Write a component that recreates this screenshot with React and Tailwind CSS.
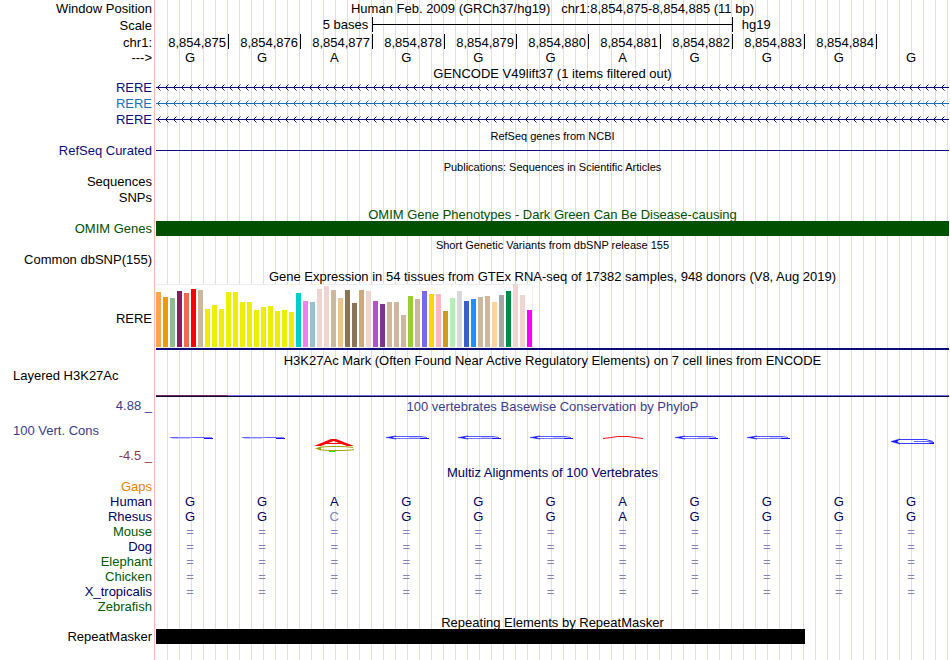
import React from 'react';
import clsx from 'clsx';

const positions = ['8,854,875', '8,854,876', '8,854,877', '8,854,878', '8,854,879', '8,854,880', '8,854,881', '8,854,882', '8,854,883', '8,854,884'];
const bases = 'GGAGGGAGGGG'.split('');

// [height, color] for each of the 54 GTEx tissues
const tissues = [
  [55, '#ffa54f'], [50, '#ee9a00'], [49, '#8fbc8f'], [56, '#8b1c62'], [54, '#ee6a50'], [58, '#ff0000'],
  [57, '#cdb79e'], [38, '#eeee00'], [42, '#eeee00'], [38, '#eeee00'], [55, '#eeee00'], [55, '#eeee00'],
  [45, '#eeee00'], [45, '#eeee00'], [37, '#eeee00'], [40, '#eeee00'], [41, '#eeee00'], [36, '#eeee00'],
  [37, '#eeee00'], [35, '#eeee00'], [54, '#00cdcd'], [46, '#ee82ee'], [45, '#9ac0cd'], [58, '#eed5d2'],
  [61, '#eed5d2'], [57, '#cdb79e'], [49, '#eec591'], [57, '#8b7355'], [44, '#8b7355'], [57, '#cdaa7d'],
  [56, '#eed5d2'], [46, '#b452cd'], [43, '#7a378b'], [45, '#cdb79e'], [45, '#cdb79e'], [32, '#cdb79e'],
  [51, '#9acd32'], [48, '#cdb79e'], [56, '#7a67ee'], [53, '#ffd700'], [53, '#ffb6c1'], [36, '#cd9b1d'],
  [49, '#b4eeb4'], [56, '#d9d9d9'], [46, '#3a5fcd'], [48, '#1e90ff'], [50, '#cdb79e'], [51, '#cdb79e'],
  [45, '#ffd39b'], [52, '#a6a6a6'], [56, '#008b45'], [63, '#eed5d2'], [52, '#eed5d2'], [37, '#ff00ff'],
];

const species = [
  { name: 'Human', color: 'text-[#000064]', seq: bases },
  { name: 'Rhesus', color: 'text-[#000064]', seq: 'GGCGGGAGGGG'.split('') },
  { name: 'Mouse', color: 'text-[#005a00]', seq: Array(11).fill('=') },
  { name: 'Dog', color: 'text-[#000064]', seq: Array(11).fill('=') },
  { name: 'Elephant', color: 'text-[#005a00]', seq: Array(11).fill('=') },
  { name: 'Chicken', color: 'text-[#005a00]', seq: Array(11).fill('=') },
  { name: 'X_tropicalis', color: 'text-[#000064]', seq: Array(11).fill('=') },
  { name: 'Zebrafish', color: 'text-[#005a00]', seq: [] },
];

const logos = ['flat', 'flat', 'stack', 'loop', 'loop', 'loop', 'peak', 'loop', 'loop', null, 'wide'];

const Row = ({ label, labelClass = 'text-black', height = 'h-4', children }) => (
  <div className={clsx('flex', height)}>
    <div className={clsx('w-[154px] shrink-0 flex items-center justify-end pr-0.5 whitespace-pre', labelClass)}>{label}</div>
    <div className="flex-1 min-w-0 border-l border-[#ffb4b4] pl-px bg-[repeating-linear-gradient(to_right,#dcdcf8_0_1px,transparent_1px_12px)] bg-no-repeat bg-position-[12px_0]">
      {children}
    </div>
  </div>
);

const Title = ({ children, className }) => (
  <div className={clsx('h-full flex items-center justify-center pt-0.5 whitespace-pre', className)}>{children}</div>
);

const Letters = ({ seq }) => (
  <div className="h-full grid grid-cols-11 items-center text-center">
    {seq.map((c, i) => (
      <span
        key={i}
        className={clsx('pr-1', c !== '=' && 'pb-0.5', (c === '=' || c === 'C') && 'text-[#8282b4]')}
      >
        {c}
      </span>
    ))}
  </div>
);

const Intron = ({ id, color }) => (
  <svg className="block w-full h-full" aria-hidden="true">
    <defs>
      <pattern id={id} width="8" height="16" patternUnits="userSpaceOnUse">
        <path
          d="M1 7h1v1h-1zM2 6h1v1h-1zM2 8h1v1h-1zM3 5h1v1h-1zM3 9h1v1h-1z"
          fill={color}
          shapeRendering="crispEdges"
        />
        <path d="M4 4h1v1h-1zM4 10h1v1h-1z" fill={color} fillOpacity="0.5" shapeRendering="crispEdges" />
      </pattern>
    </defs>
    <rect width="100%" height="16" fill={`url(#${id})`} />
    <rect y="7" width="100%" height="1" fill={color} />
  </svg>
);

const Logo = ({ kind }) => {
  if (!kind) return <span />;
  return (
    <svg width="44" height="24" viewBox="0 0 44 24" className="ml-[14px]" aria-hidden="true">
      {kind === 'flat' && (
        <g fill="none">
          <path d="M0 7.5H42" stroke="#8080ff" />
          <path d="M2 8.5H20" stroke="#c8c8ff" />
          <path d="M1 7.5H8M24 7.5H34" stroke="#5a5aff" />
          <path d="M34 8.5H43" stroke="#1414f0" />
        </g>
      )}
      {kind === 'loop' && (
        <g fill="none">
          <path d="M9 6.5H35L41 7.5" stroke="#5a5aff" />
          <path d="M9 8.5H34" stroke="#7878ff" />
          <path d="M0 7.5L10 6L6 7.5L10 9Z" fill="#1414ff" stroke="#1414ff" strokeWidth="0.5" />
          <path d="M23 7.5H37" stroke="#c8c8ff" />
          <path d="M34 8.5H43" stroke="#1414ff" />
        </g>
      )}
      {kind === 'wide' && (
        <g fill="none">
          <path d="M8 9.5H35L42 11.5" stroke="#3c3cff" />
          <path d="M8 13.5H37" stroke="#3c3cff" />
          <path d="M0 11.5L9 9L6 11.5L9 14Z" fill="#1414ff" stroke="#1414ff" strokeWidth="0.5" />
          <path d="M23 11.5H42" stroke="#6464ff" />
          <path d="M36 13L43 12V14H38Z" fill="#1414ff" />
        </g>
      )}
      {kind === 'peak' && (
        <path d="M0 8.5L8 7.5L15 6.5H25L32 7.5L40 8.5" fill="none" stroke="#f01414" />
      )}
      {kind === 'stack' && (
        <g fill="none">
          <path d="M0 16L17 9H22L40 16H33L19.5 11L7 16Z" fill="#ff0000" />
          <path d="M10 13.5H30" stroke="#ff0000" />
          <path d="M39 17.5Q34 16.5 21 16.5Q4 16.5 4 18.5Q4 20.5 21 20.5Q37 20.5 40 19.5" stroke="#a0a000" />
          <path d="M1 18.5L7 16.5V20.5Z" fill="#a0a000" />
          <path d="M15 21.5H21" stroke="#00ff00" />
        </g>
      )}
    </svg>
  );
};

export default function App() {
  return (
    <main className="min-h-screen flex flex-col bg-white pr-px text-[13px] leading-4 text-black font-['Liberation_Sans',Arial,sans-serif]">
      <Row label="Window Position" labelClass="pt-0.5">
        <Title>Human Feb. 2009 (GRCh37/hg19)   chr1:8,854,875-8,854,885 (11 bp)</Title>
      </Row>
      <Row label="Scale" labelClass="pt-0.5" height="h-[18px]">
        <div className="h-full grid grid-cols-11 items-center">
          <span className="col-span-3 text-right pr-1">5 bases</span>
          <div className="col-span-5 self-start mt-px h-[15px] border-x border-black flex items-center">
            <div className="w-full h-px bg-black" />
          </div>
          <span className="col-span-3 pl-[9px]">hg19</span>
        </div>
      </Row>
      <Row label="chr1:" labelClass="pt-0.5">
        <div className="h-full grid grid-cols-11 pl-px">
          {positions.map((p) => (
            <span key={p} className="h-[15px] border-r border-black text-right pt-px pr-0.5">{p}</span>
          ))}
        </div>
      </Row>
      <Row label="--->" height="h-[15px]">
        <Letters seq={bases} />
      </Row>

      <Row height="h-[15px]">
        <Title>GENCODE V49lift37 (1 items filtered out)</Title>
      </Row>
      <Row label="RERE" labelClass="text-[#0c0c78]">
        <Intron id="intron-a" color="#0c0c78" />
      </Row>
      <Row label="RERE" labelClass="text-[#1a70b4]">
        <Intron id="intron-b" color="#1a70b4" />
      </Row>
      <Row label="RERE" labelClass="text-[#0c0c78]">
        <Intron id="intron-c" color="#0c0c78" />
      </Row>

      <Row height="h-[14px]">
        <Title className="text-[11px]">RefSeq genes from NCBI</Title>
      </Row>
      <Row label="RefSeq Curated" labelClass="text-[#0c0c78] pt-0.5">
        <div className="h-full flex items-center">
          <div className="w-full h-px bg-[#0c0c78]" />
        </div>
      </Row>
      <Row>
        <Title className="text-[11px]">Publications: Sequences in Scientific Articles</Title>
      </Row>
      <Row label="Sequences" />
      <Row label="SNPs" />

      <Row height="h-[15px]">
        <Title className="text-[#005000]">OMIM Gene Phenotypes - Dark Green Can Be Disease-causing</Title>
      </Row>
      <Row label="OMIM Genes" labelClass="text-[#005000]" height="h-[15px]">
        <div className="h-full bg-[#005000]" />
      </Row>
      <Row>
        <Title className="text-[11px]">Short Genetic Variants from dbSNP release 155</Title>
      </Row>
      <Row label="Common dbSNP(155)" />

      <Row>
        <Title>Gene Expression in 54 tissues from GTEx RNA-seq of 17382 samples, 948 donors (V8, Aug 2019)</Title>
      </Row>
      <Row label="RERE" labelClass="pt-1" height="h-[66px]">
        <div className="h-full flex flex-col border-b-2 border-[#0c0c78]">
          <div className="w-fit h-full flex items-end gap-0.5 bg-white border-t border-r border-b border-[#eeeeee]">
            {tissues.map(([h, color], i) => (
              <div key={i} className="w-[5px]" style={{ height: h, backgroundColor: color }} />
            ))}
          </div>
        </div>
      </Row>

      <Row height="h-[18px]">
        <Title className="pt-1!">H3K27Ac Mark (Often Found Near Active Regulatory Elements) on 7 cell lines from ENCODE</Title>
      </Row>
      <Row label="Layered H3K27Ac" labelClass="justify-start! items-start! pl-[13px]" height="h-[29px]">
        <div className="h-full flex flex-col justify-end">
          <div className="grid grid-cols-11">
            <div className="h-px bg-[#78285a]" />
            <div className="col-span-10 h-px bg-[#6e6ee6]" />
          </div>
          <div className="h-px bg-[#0a0a32]" />
        </div>
      </Row>

      <Row label="4.88 _" labelClass="text-[#3c3c8c] pb-0.5" height="h-[19px]">
        <Title className="text-[#3c3c8c] pb-0.5">100 vertebrates Basewise Conservation by PhyloP</Title>
      </Row>
      <Row
        height="h-12"
        labelClass="flex-col"
        label={
          <>
            <span className="self-start pl-[13px] pt-[7px] text-[#3c3c8c]">100 Vert. Cons</span>
            <span className="self-end mt-auto text-[#8c3c3c]">-4.5 _</span>
          </>
        }
      >
        <div className="grid grid-cols-11 pt-[14px]">
          {logos.map((kind, i) => <Logo key={i} kind={kind} />)}
        </div>
      </Row>

      <Row height="h-[15px]">
        <Title className="text-[#000064]">Multiz Alignments of 100 Vertebrates</Title>
      </Row>
      <Row label="Gaps" labelClass="text-[#e68200]" height="h-[15px]" />
      {species.map((s) => (
        <Row key={s.name} label={s.name} labelClass={s.color} height="h-[15px]">
          <div className="h-full text-[#000064]">
            <Letters seq={s.seq} />
          </div>
        </Row>
      ))}

      <Row height="h-[15px]">
        <Title>Repeating Elements by RepeatMasker</Title>
      </Row>
      <Row label="RepeatMasker" height="h-[15px]">
        <div className="h-full w-9/11 bg-black" />
      </Row>
      <Row height="flex-1" />
    </main>
  );
}
